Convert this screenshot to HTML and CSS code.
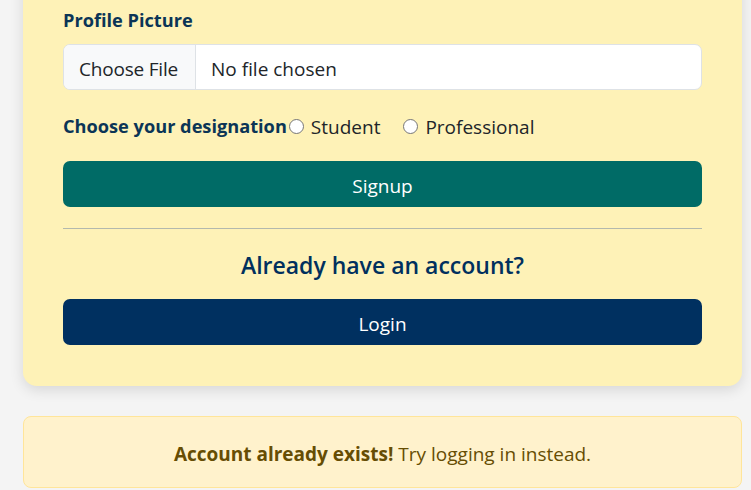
FILE: index.html
```html
<!DOCTYPE html>
<html lang="en">
<head>
<meta charset="utf-8">
<title>Signup</title>
<link rel="stylesheet" href="styles.css">
</head>
<body>
<main class="page">
  <section class="card">
    <div class="field">
      <label class="label" for="pic">Profile Picture</label>
      <div class="file-input" id="pic">
        <span class="file-btn">Choose File</span>
        <span class="file-name">No file chosen</span>
      </div>
    </div>
    <div class="designation">
      <span class="label">Choose your designation</span>
      <label class="radio"><span class="radio-dot"></span>Student</label>
      <label class="radio radio-gap"><span class="radio-dot"></span>Professional</label>
    </div>
    <button class="btn btn-signup" type="button">Signup</button>
    <hr class="divider">
    <h4 class="already">Already have an account?</h4>
    <button class="btn btn-login" type="button">Login</button>
  </section>
  <div class="alert"><strong>Account already exists!</strong> Try logging in instead.</div>
</main>
</body>
</html>
```
FILE: styles.css
```css
* { box-sizing: border-box; }
html, body { margin: 0; padding: 0; }
body {
  background: #f4f4f4;
  font-family: "Open Sans", "Noto Sans", sans-serif;
  color: #212529;
  overflow: hidden;
}
.page {
  padding: 0 9px 0 23px;
}
.card {
  margin-top: -39px;
  background: #fef2b7;
  border-radius: 14px;
  box-shadow: 0 4px 14px rgba(0, 0, 0, 0.12);
  padding: 45px 40px 41px;
}
.label {
  display: block;
  font-weight: 700;
  font-size: 18.2px;
  line-height: 29px;
  color: #0b3556;
  letter-spacing: 0;
}
.field .label { margin-bottom: 9px; }
.file-input {
  display: flex;
  height: 46px;
  background: #fff;
  border: 1px solid #dee2e6;
  border-radius: 7px;
  overflow: hidden;
  font-size: 19px;
  color: #212529;
}
.file-btn {
  display: flex;
  align-items: center;
  padding: 3px 15px 0;
  background: #f8f9fa;
  border-right: 1px solid #dee2e6;
  width: 132px;
  letter-spacing: -0.2px;
}
.file-name {
  display: flex;
  align-items: center;
  padding: 3px 0 0 15px;
}
.designation {
  display: flex;
  align-items: center;
  height: 29px;
  margin: 22px 0 20px;
}
.radio {
  display: flex;
  align-items: center;
  font-size: 19px;
  color: #212529;
}
.radio-gap { margin-left: 21px; }
.radio-dot {
  width: 15px;
  height: 15px;
  border: 1px solid #767676;
  border-radius: 50%;
  background: #fff;
  margin: 0 7px 0 2px;
}
.btn {
  display: block;
  width: 100%;
  height: 46px;
  padding: 3px 0 0;
  border: 0;
  border-radius: 7px;
  color: #fff;
  font-family: inherit;
  font-size: 19px;
}
.btn-signup { background: #006b66; }
.btn-login { background: #003060; }
.divider {
  border: 0;
  border-top: 1px solid #b3b9ad;
  margin: 21px 0 0;
}
.already {
  margin: 0;
  padding: 18px 0 16px;
  text-align: center;
  font-size: 23px;
  line-height: 36px;
  font-weight: 600;
  color: #00305e;
}
.alert {
  margin-top: 30px;
  background: #fff2cc;
  border: 1px solid #ffe59a;
  border-radius: 8px;
  padding: 22px 20px 18px;
  text-align: center;
  font-size: 19px;
  line-height: 30px;
  color: #664d03;
}
```
